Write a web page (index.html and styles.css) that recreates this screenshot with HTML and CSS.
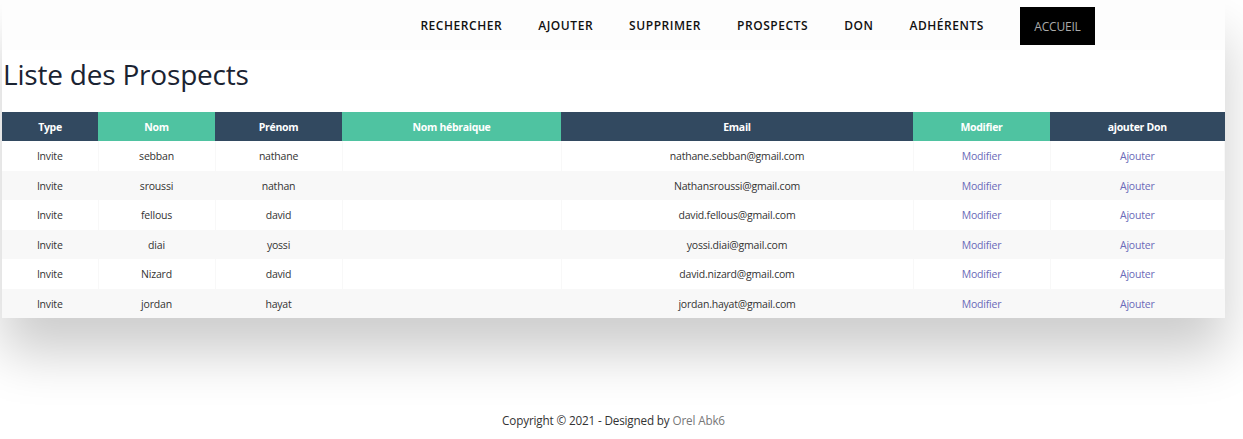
FILE: index.html
```html
<!DOCTYPE html>
<html lang="fr">
<head>
<meta charset="utf-8">
<title>Liste des Prospects</title>
<link rel="stylesheet" href="styles.css">
</head>
<body>
<div class="wrapper">
  <nav class="nav">
    <a class="nav-link" href="#">RECHERCHER</a>
    <a class="nav-link" href="#">AJOUTER</a>
    <a class="nav-link" href="#">SUPPRIMER</a>
    <a class="nav-link" href="#">PROSPECTS</a>
    <a class="nav-link" href="#">DON</a>
    <a class="nav-link" href="#">ADHÉRENTS</a>
    <a class="nav-home" href="#">ACCUEIL</a>
  </nav>
  <h2 class="title">Liste des Prospects</h2>
  <table class="fl-table">
    <thead>
      <tr>
        <th class="c-type">Type</th>
        <th class="c-nom">Nom</th>
        <th class="c-prenom">Prénom</th>
        <th class="c-heb">Nom hébraique</th>
        <th class="c-email">Email</th>
        <th class="c-mod">Modifier</th>
        <th class="c-don">ajouter Don</th>
      </tr>
    </thead>
    <tbody>
      <tr><td>Invite</td><td>sebban</td><td>nathane</td><td></td><td>nathane.sebban@gmail.com</td><td><a href="#">Modifier</a></td><td><a href="#">Ajouter</a></td></tr>
      <tr><td>Invite</td><td>sroussi</td><td>nathan</td><td></td><td>Nathansroussi@gmail.com</td><td><a href="#">Modifier</a></td><td><a href="#">Ajouter</a></td></tr>
      <tr><td>Invite</td><td>fellous</td><td>david</td><td></td><td>david.fellous@gmail.com</td><td><a href="#">Modifier</a></td><td><a href="#">Ajouter</a></td></tr>
      <tr><td>Invite</td><td>diai</td><td>yossi</td><td></td><td>yossi.diai@gmail.com</td><td><a href="#">Modifier</a></td><td><a href="#">Ajouter</a></td></tr>
      <tr><td>Invite</td><td>Nizard</td><td>david</td><td></td><td>david.nizard@gmail.com</td><td><a href="#">Modifier</a></td><td><a href="#">Ajouter</a></td></tr>
      <tr><td>Invite</td><td>jordan</td><td>hayat</td><td></td><td>jordan.hayat@gmail.com</td><td><a href="#">Modifier</a></td><td><a href="#">Ajouter</a></td></tr>
    </tbody>
  </table>
</div>
<footer class="footer">Copyright © 2021 - Designed by <a href="#">Orel Abk6</a></footer>
</body>
</html>
```
FILE: styles.css
```css
html, body {
  margin: 0;
  padding: 0;
  background: #ffffff;
  font-family: "Open Sans", "Noto Sans", sans-serif;
}

.wrapper {
  margin: 0 0 0 2px;
  width: 1223px;
  background: #ffffff;
  box-shadow: 0 35px 50px rgba(0, 0, 0, 0.2);
}

.nav {
  height: 50px;
  display: flex;
  align-items: center;
  justify-content: flex-end;
  padding-right: 130px;
  background: #fdfdfd;
}

.nav-link {
  color: #111;
  text-decoration: none;
  font-size: 12px;
  font-weight: 600;
  letter-spacing: 0.55px;
  margin-right: 36px;
}

.nav-home {
  display: flex;
  align-items: center;
  justify-content: center;
  width: 75px;
  height: 38px;
  margin-top: 2px;
  background: #000;
  color: #aaa;
  text-decoration: none;
  font-size: 12px;
  letter-spacing: -0.2px;
}

.title {
  margin: 0;
  height: 62px;
  box-sizing: border-box;
  padding: 5px 0 0 1px;
  font-size: 28px;
  font-weight: 400;
  color: #1a2332;
  letter-spacing: -0.2px;
  background: #fff;
}

.fl-table {
  border-collapse: collapse;
  width: 100%;
  table-layout: fixed;
  font-size: 10.5px;
  white-space: nowrap;
  background: #fff;
}

.fl-table th {
  height: 29px;
  padding: 0;
  text-align: center;
  color: #fff;
  font-weight: 700;
  background: #4fc3a1;
  letter-spacing: -0.3px;
}

.fl-table th:nth-child(odd) {
  background: #324960;
}

.fl-table td {
  height: 28.5px;
  padding: 1px 0 0;
  text-align: center;
  color: #333;
  border-right: 1px solid #f8f8f8;
  letter-spacing: -0.2px;
}

.fl-table tbody tr:nth-child(even) {
  background: #f8f8f8;
}

.fl-table td a {
  color: #6a6ab8;
  text-decoration: none;
}

.c-type { width: 96px; }
.c-nom { width: 117px; }
.c-prenom { width: 127px; }
.c-heb { width: 219px; }
.c-email { width: 352px; }
.c-mod { width: 137px; }
.c-don { width: auto; }

.footer {
  margin: 94px 0 0 2px;
  width: 1223px;
  text-align: center;
  font-size: 11.7px;
  letter-spacing: -0.15px;
  color: #333;
}

.footer a {
  color: #777;
  text-decoration: none;
}
```
